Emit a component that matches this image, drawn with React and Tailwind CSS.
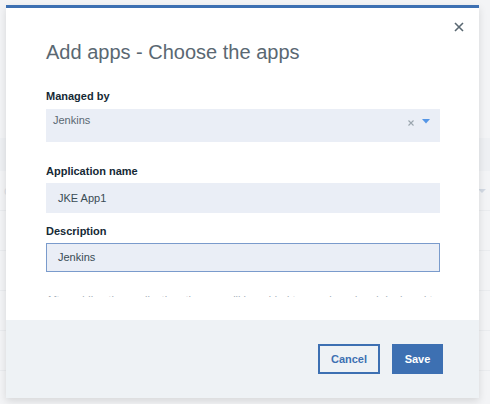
import React from 'react';

const Label = ({ children, className = '' }) => (
    <label className={`block text-[11px] leading-4 font-bold text-[#152935] ${className}`}>{children}</label>
);

const App = () => {
    const rows = [0, 1, 2, 3, 4, 5, 6];

    return (
        <div className="relative min-h-screen h-[404px] overflow-hidden bg-[#f3f4f6] font-['Liberation_Sans',Arial,sans-serif]">
            {/* page behind the modal */}
            <div className="pt-[138px]">
                <div className="h-[33px] bg-[#eef0f3]" />
                {rows.map((r) => (
                    <div key={r} className="h-[40px] border-b border-[#eaecef] flex items-center justify-between px-1">
                        <span className="text-[12px] text-[#dde1e6]">{r === 0 ? 'ou' : ''}</span>
                        {r === 0 && <span className="w-0 h-0 border-x-[4px] border-x-transparent border-t-[4px] border-t-[#d3dae4]" />}
                    </div>
                ))}
            </div>

            {/* modal */}
            <div className="absolute top-[5px] left-[6px] w-[473px] h-[393px] bg-white border-t-[3px] border-[#3d70b2] shadow-[0_3px_8px_rgba(0,0,0,0.12)] flex flex-col">
                <div className="relative h-[312px] pt-[32px] pl-[40px] pr-[39px]">
                    <button className="absolute top-[14px] right-[15px] text-[#5a6872]">
                        <svg width="10" height="10" viewBox="0 0 10 10" fill="none" stroke="currentColor" strokeWidth="1.6">
                            <path d="M1 1 L9 9 M9 1 L1 9" />
                        </svg>
                    </button>

                    <h2 className="text-[20px] leading-6 text-[#5a6872] font-normal">Add apps - Choose the apps</h2>

                    <div className="mt-[24px] h-[209px] overflow-hidden">
                        <Label>Managed by</Label>
                        <div className="mt-[5px] h-[33px] bg-[#eaeef6] flex items-start justify-between pt-[3px] pl-[7px] pr-[10px]">
                            <span className="text-[11px] leading-4 text-[#5a6872]">Jenkins</span>
                            <div className="flex items-center gap-[8px] mt-[8px]">
                                <svg width="6" height="6" viewBox="0 0 6 6" fill="none" stroke="#9aa5ae" strokeWidth="1.1">
                                    <path d="M0.5 0.5 L5.5 5.5 M5.5 0.5 L0.5 5.5" />
                                </svg>
                                <svg width="8" height="5" viewBox="0 0 8 5" className="-mt-[3px]">
                                    <path d="M0 0 H8 L4 4.5 Z" fill="#5596e6" />
                                </svg>
                            </div>
                        </div>

                        <Label className="mt-[21px]">Application name</Label>
                        <div className="mt-[4px] h-[30px] bg-[#eaeef6] flex items-center pl-[12px]">
                            <span className="text-[11px] text-[#394b54]">JKE App1</span>
                        </div>

                        <Label className="mt-[10px]">Description</Label>
                        <div className="mt-[4px] h-[29px] bg-[#eaeef6] border border-[#7a9bcc] flex items-center pl-[11px]">
                            <span className="text-[11px] text-[#394b54]">Jenkins</span>
                        </div>

                        <p className="mt-[20px] text-[11px] leading-4 text-[#a3adb6] whitespace-nowrap">
                            After adding the application, the app will be added to your board and deployed to
                        </p>
                    </div>
                </div>

                <div className="flex-1 bg-[#eef2f5] flex items-center justify-end gap-[12px] pr-[36px]">
                    <button className="h-[30px] w-[62px] border-2 border-[#3d70b2] text-[#3d70b2] text-[11px] font-bold">
                        Cancel
                    </button>
                    <button className="h-[30px] w-[51px] bg-[#3d70b2] text-white text-[11px] font-bold">
                        Save
                    </button>
                </div>
            </div>
        </div>
    );
};

export default App;
